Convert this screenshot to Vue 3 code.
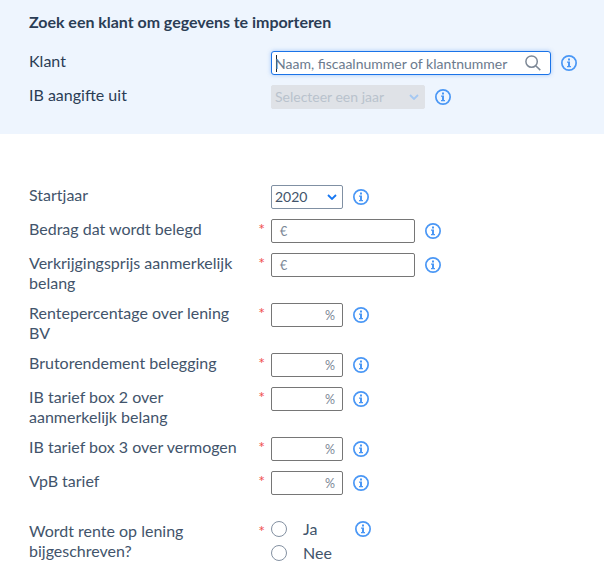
<script setup>
import { ref } from 'vue'

const klant = ref('')
const startjaar = ref('2020')
const bijschrijven = ref('')

const velden = ref([
  { id: 'bedrag', label: 'Bedrag dat wordt belegd', type: 'euro', value: '' },
  { id: 'prijs', label: 'Verkrijgingsprijs aanmerkelijk belang', type: 'euro', value: '' },
  { id: 'rente', label: 'Rentepercentage over lening BV', type: 'procent', value: '' },
  { id: 'bruto', label: 'Brutorendement belegging', type: 'procent', value: '' },
  { id: 'box2', label: 'IB tarief box 2 over aanmerkelijk belang', type: 'procent', value: '' },
  { id: 'box3', label: 'IB tarief box 3 over vermogen', type: 'procent', value: '' },
  { id: 'vpb', label: 'VpB tarief', type: 'procent', value: '' },
])
</script>

<template>
  <svg class="symbols" aria-hidden="true">
    <symbol id="info" viewBox="0 0 16 16">
      <circle cx="8" cy="8" r="7.15" fill="none" stroke="currentColor" stroke-width="1.7" />
      <path d="M7 3.5h2v2H7zM6 6.5h3v4.5h1v1.2H6V11h1V7.7H6z" fill="currentColor" />
    </symbol>
    <symbol id="chevron" viewBox="0 0 10 6">
      <path d="M1 1l4 4 4-4" fill="none" stroke="currentColor" stroke-width="1.8" />
    </symbol>
  </svg>

  <div class="form">
    <section class="import">
      <h3>Zoek een klant om gegevens te importeren</h3>
      <div class="row">
        <label class="label" for="klant">Klant</label>
        <span class="required"></span>
        <div class="field search">
          <span v-if="!klant" class="caret"></span>
          <input
            id="klant"
            v-model="klant"
            type="text"
            placeholder="Naam, fiscaalnummer of klantnummer"
          />
          <svg class="magnifier" viewBox="0 0 16 16">
            <circle cx="6.6" cy="6.6" r="5.7" />
            <path d="M10.7 10.7l4.6 4.4" />
          </svg>
        </div>
        <svg class="info"><use href="#info" /></svg>
      </div>
      <div class="row">
        <span class="label">IB aangifte uit</span>
        <span class="required"></span>
        <div class="field select disabled">
          <span>Selecteer een jaar</span>
          <svg class="chevron"><use href="#chevron" /></svg>
        </div>
        <svg class="info"><use href="#info" /></svg>
      </div>
    </section>

    <section class="details">
      <div class="row">
        <span class="label">Startjaar</span>
        <span class="required"></span>
        <div class="field select procent">
          <span>{{ startjaar }}</span>
          <svg class="chevron"><use href="#chevron" /></svg>
        </div>
        <svg class="info"><use href="#info" /></svg>
      </div>

      <div v-for="veld in velden" :key="veld.id" class="row">
        <label class="label" :for="veld.id">{{ veld.label }}</label>
        <span class="required">*</span>
        <div class="field" :class="veld.type">
          <span v-if="veld.type === 'euro'" class="unit">€</span>
          <input :id="veld.id" v-model="veld.value" type="text" />
          <span v-if="veld.type === 'procent'" class="unit">%</span>
        </div>
        <svg class="info"><use href="#info" /></svg>
      </div>

      <div class="row radio-row">
        <span class="label">Wordt rente op lening bijgeschreven?</span>
        <span class="required">*</span>
        <div class="radios">
          <label><input v-model="bijschrijven" type="radio" value="ja" /><span>Ja</span></label>
          <label><input v-model="bijschrijven" type="radio" value="nee" /><span>Nee</span></label>
        </div>
        <svg class="info"><use href="#info" /></svg>
      </div>
    </section>
  </div>
</template>

<style>
body {
  margin: 0;
  background: #ffffff;
}
</style>

<style scoped>
.symbols {
  display: none;
}

.form {
  font-family: Lato, sans-serif;
  font-size: 16px;
  line-height: 20px;
  color: #42546b;
}

.import {
  box-sizing: border-box;
  height: 134px;
  padding: 12px 0 0 29px;
  background: #eef5fe;
  color: #2b3d55;
}

h3 {
  margin: 0 0 19px;
  font-size: 16px;
  font-weight: 700;
  letter-spacing: -0.03px;
}

.details {
  padding: 51px 0 0 29px;
}

.row {
  display: flex;
  align-items: flex-start;
  min-height: 24px;
  margin-bottom: 10px;
}

.label {
  width: 215px;
}

.required {
  width: 8px;
  margin: 0 6px 0 13px;
  text-align: right;
  color: #f0504f;
}

.field {
  box-sizing: border-box;
  display: flex;
  align-items: center;
  height: 24px;
  border: 1px solid #767676;
  border-radius: 2px;
  background: #ffffff;
}

.field input {
  flex: 1;
  min-width: 0;
  padding: 0;
  border: none;
  outline: none;
  background: transparent;
  font: inherit;
  color: inherit;
}

.search {
  width: 280px;
  padding: 0 9px 0 4px;
  border-color: #1a73e8;
  border-radius: 3px;
  box-shadow: 0 0 4px rgba(26, 115, 232, 0.35);
  font-size: 14px;
}

.search input {
  padding-top: 2px;
}

.search input::placeholder {
  color: #6b7a8d;
  opacity: 1;
}

.caret {
  width: 1px;
  height: 17px;
  margin-right: -2px;
  background: #1c2733;
}

.magnifier {
  width: 16px;
  height: 16px;
  fill: none;
  stroke: #7d8896;
  stroke-width: 1.5;
}

.select {
  justify-content: space-between;
  padding: 0 5px 0 3px;
  border-color: #8090a3;
  font-size: 14px;
}

.chevron {
  width: 10px;
  height: 6px;
  color: #1677f2;
}

.disabled {
  width: 154px;
  border-color: #dfe2e7;
  background: #dfe2e7;
  color: #b9c2cd;
}

.disabled .chevron {
  color: #a5c8f2;
}

.euro {
  width: 144px;
  padding: 0 8px;
}

.procent {
  width: 72px;
}

.procent:not(.select) {
  padding: 0 7px;
}

.unit {
  padding-top: 2px;
  color: #7b8796;
  font-size: 12.5px;
}

.info {
  width: 16px;
  height: 16px;
  margin: 4px 0 0 10px;
  color: #4a97f5;
}

.radio-row {
  margin-top: 26px;
}

.radios {
  display: flex;
  flex-direction: column;
  gap: 4px;
  width: 84px;
  margin-top: -2px;
}

.radios label {
  display: flex;
  align-items: center;
  gap: 16px;
  height: 20px;
}

.radios input {
  appearance: none;
  box-sizing: border-box;
  width: 16px;
  height: 16px;
  margin: 0;
  border: 1px solid #8491a2;
  border-radius: 50%;
}

.radios input:checked {
  border: 5px solid #1677f2;
}

.radio-row .info {
  margin: 0;
}
</style>
